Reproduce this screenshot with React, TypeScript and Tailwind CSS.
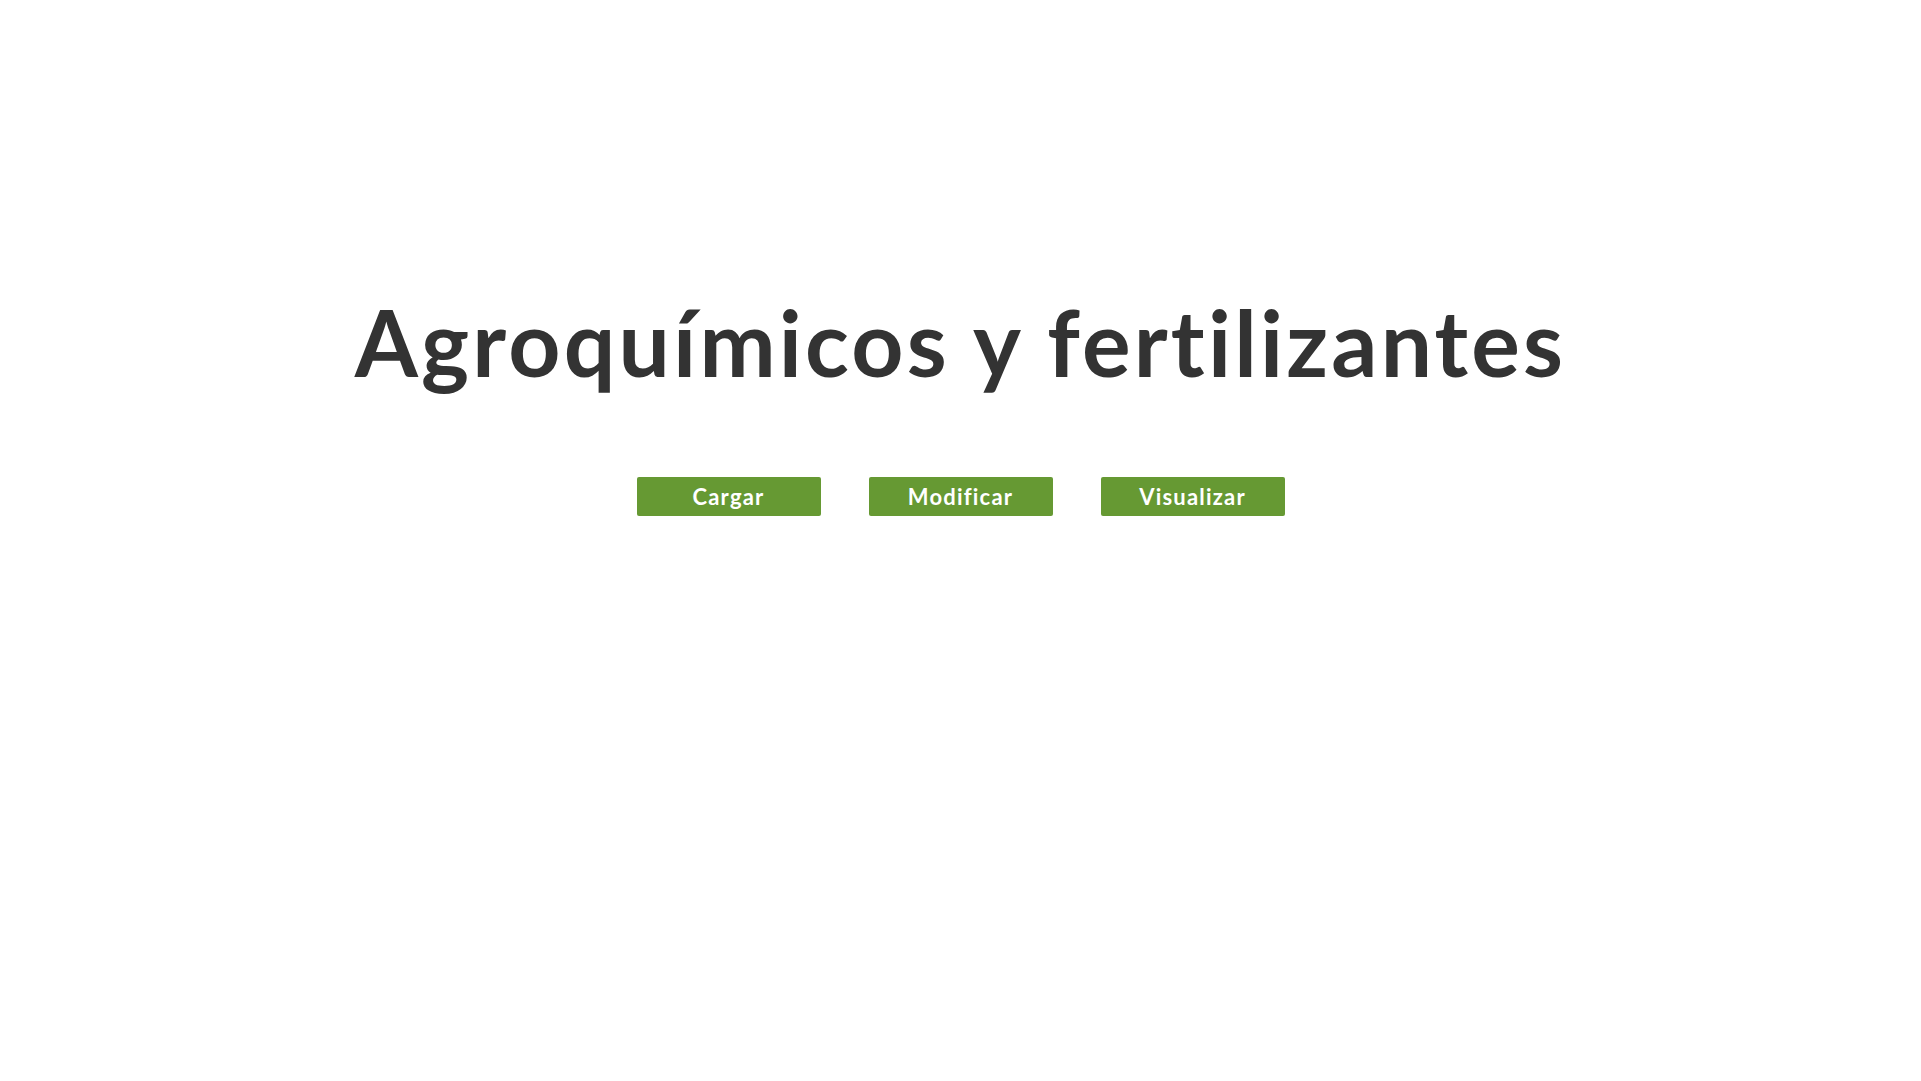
import React from "react";

export default function App() {
  const buttons = ["Cargar", "Modificar", "Visualizar"];
  return (
    <div
      className="min-h-screen w-full bg-white flex flex-col items-center [font-variant-ligatures:none]"
      style={{ fontFamily: "Lato, 'Open Sans', sans-serif" }}
    >
      <h1 className="mt-[287px] text-[91px] leading-[1.2] font-bold text-[#333333] tracking-[3.2px]">
        Agroquímicos y fertilizantes
      </h1>
      <div className="mt-[81px] flex gap-[48px]">
        {buttons.map((b) => (
          <button
            key={b}
            className="w-[184px] h-[39px] bg-[#669933] rounded-[2px] text-white font-bold text-[22px] tracking-[1.2px] leading-none flex items-center justify-center"
          >
            {b}
          </button>
        ))}
      </div>
    </div>
  );
}
